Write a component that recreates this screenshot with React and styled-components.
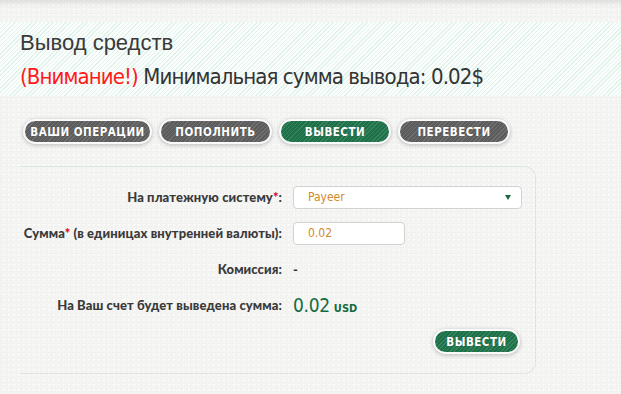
import React from "react";
import styled, { createGlobalStyle } from "styled-components";

const Global = createGlobalStyle`
  html, body { margin: 0; padding: 0; }
  body {
    width: 621px; height: 394px; overflow: hidden;
    background-color: #f4f4f3;
    background-image:
      radial-gradient(rgba(0,0,0,0.025) 1px, transparent 1px),
      radial-gradient(rgba(255,255,255,0.7) 1px, transparent 1px);
    background-size: 3px 3px, 5px 5px;
    background-position: 0 0, 1px 2px;
    font-family: "Liberation Sans", Arial, sans-serif;
  }
`;

const Page = styled.div`
  position: relative;
  height: 394px;
  padding-top: 22px;
  box-sizing: border-box;
  box-shadow: inset 0 6px 6px -4px rgba(0,0,0,0.12);
`;

const Header = styled.header`
  height: 74px;
  box-sizing: border-box;
  padding: 6px 20px 0;
  background-color: #fcfefd;
  background-image: repeating-linear-gradient(
    -45deg,
    #e0f3ea 0px, #e0f3ea 1px,
    transparent 1px, transparent 3px
  );
`;

const Title = styled.h1`
  margin: 0;
  font-family: "Liberation Sans", Arial, sans-serif;
  font-weight: normal;
  font-size: 22px;
  line-height: 30px;
  color: #3a3a3a;
`;

const Notice = styled.div`
  margin-top: 3px;
  white-space: nowrap;
  font-family: "DejaVu Sans Condensed", "DejaVu Sans", sans-serif;
  font-size: 22px;
  letter-spacing: -0.9px;
  line-height: 32px;
  color: #333;
`;

const Warn = styled.span`
  color: #ff1a1a;
`;

const Nav = styled.nav`
  display: flex;
  gap: 7px;
  padding: 23px 0 0 23px;
`;

const Pill = styled.button`
  height: 25px;
  width: ${p => p.$w}px;
  box-sizing: border-box;
  border: 2px solid #fafafa;
  border-radius: 13px;
  box-shadow: 0 1px 4px rgba(0,0,0,0.25);
  background-color: ${p => (p.$green ? "#1d7148" : "#5c5c5c")};
  background-image: repeating-linear-gradient(
    -45deg,
    rgba(255,255,255,0.12) 0px, rgba(255,255,255,0.12) 1px,
    transparent 1px, transparent 3px
  );
  color: #fff;
  white-space: nowrap;
  font-family: "DejaVu Sans Condensed", "DejaVu Sans", sans-serif;
  font-weight: bold;
  font-size: 11.5px;
  letter-spacing: 0.5px;
  text-transform: uppercase;
  padding: 0;
  cursor: pointer;
  text-shadow: 0 0 1px rgba(0,0,0,0.3);
`;

const Card = styled.section`
  margin: 22px 0 0 21px;
  width: 515px;
  height: 208px;
  box-sizing: border-box;
  border-top: 1px solid #d6e9de;
  border-right: 1px dotted #c9d6cf;
  border-bottom: 1px dotted #c9d6cf;
  border-radius: 0 12px 12px 0;
  padding-top: 12px;
`;

const Row = styled.div`
  display: grid;
  grid-template-columns: 261px auto;
  column-gap: 11px;
  align-items: center;
  height: ${p => p.$h}px;
`;

const Label = styled.label`
  text-align: right;
  font-family: "Lato", sans-serif;
  font-weight: 900;
  font-size: 13px;
  letter-spacing: 0.1px;
  color: #3a3a3a;
`;

const Star = styled.span`
  color: #e3001b;
`;

const Field = styled.div`
  height: 23px;
  width: ${p => p.$w}px;
  box-sizing: border-box;
  border: 1px solid #d2d2d2;
  border-radius: 4px;
  background: #fff;
  display: flex;
  align-items: center;
  justify-content: space-between;
  padding: 0 10px 0 14px;
  font-family: "DejaVu Sans Condensed", "DejaVu Sans", sans-serif;
  font-size: 12px;
  color: #d2892b;
`;

const Caret = styled.span`
  width: 0; height: 0;
  border-left: 3.5px solid transparent;
  border-right: 3.5px solid transparent;
  border-top: 5px solid #176a44;
`;

const Plain = styled.span`
  font-family: "Lato", sans-serif;
  font-weight: 900;
  font-size: 13px;
  color: #333;
`;

const Amount = styled.span`
  font-family: "DejaVu Sans Condensed", "DejaVu Sans", sans-serif;
  font-size: 19px;
  letter-spacing: -0.3px;
  color: #136b43;
`;

const Unit = styled.span`
  font-family: "DejaVu Sans Condensed", "DejaVu Sans", sans-serif;
  font-weight: bold;
  font-size: 11px;
  color: #136b43;
  margin-left: 4px;
`;

const Actions = styled.div`
  display: flex;
  justify-content: flex-end;
  padding: 6px 15px 0 0;
`;

export default function App() {
  return (
    <>
      <Global />
      <Page>
        <Header>
          <Title>Вывод средств</Title>
          <Notice>
            <Warn>(Внимание!)</Warn> Минимальная сумма вывода: 0.02$
          </Notice>
        </Header>
        <Nav>
          <Pill $w={129}>Ваши операции</Pill>
          <Pill $w={113}>Пополнить</Pill>
          <Pill $w={112} $green>Вывести</Pill>
          <Pill $w={112}>Перевести</Pill>
        </Nav>
        <Card>
          <Row $h={36}>
            <Label>На платежную систему<Star>*</Star>:</Label>
            <Field $w={229}>Payeer<Caret /></Field>
          </Row>
          <Row $h={36}>
            <Label>Сумма<Star>*</Star> (в единицах внутренней валюты):</Label>
            <Field $w={112}>0.02</Field>
          </Row>
          <Row $h={36}>
            <Label>Комиссия:</Label>
            <Plain>-</Plain>
          </Row>
          <Row $h={36}>
            <Label>На Ваш счет будет выведена сумма:</Label>
            <span><Amount>0.02</Amount><Unit>USD</Unit></span>
          </Row>
          <Actions>
            <Pill $w={87} $green>Вывести</Pill>
          </Actions>
        </Card>
      </Page>
    </>
  );
}
